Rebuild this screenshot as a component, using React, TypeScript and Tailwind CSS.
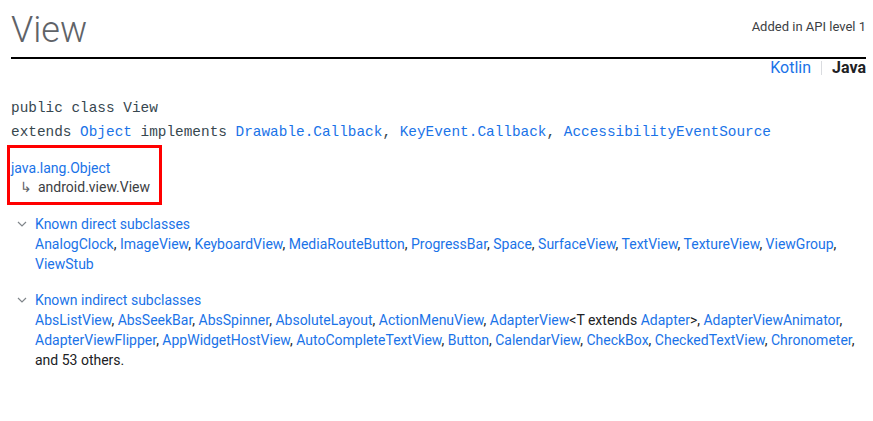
const link = 'text-[#1a73e8]';

const direct = [
  'AnalogClock',
  'ImageView',
  'KeyboardView',
  'MediaRouteButton',
  'ProgressBar',
  'Space',
  'SurfaceView',
  'TextView',
  'TextureView',
  'ViewGroup',
  'ViewStub',
];

function Chevron() {
  return (
    <svg width="10" height="6" viewBox="0 0 10 6" className="mt-[7px] shrink-0">
      <path d="M1 1l4 4 4-4" fill="none" stroke="#80868b" strokeWidth="1.2" />
    </svg>
  );
}

function LinkList({ items }: { items: string[] }) {
  return (
    <>
      {items.map((name, i) => (
        <span key={name}>
          <a className={link}>{name}</a>
          {i < items.length - 1 ? ', ' : ''}
        </span>
      ))}
    </>
  );
}

export default function App() {
  return (
    <div
      className="min-h-[421px] bg-white pl-[11px] pr-[7px] text-[#202124]"
      style={{ fontFamily: 'Roboto, "Liberation Sans", sans-serif' }}
    >
      {/* Header */}
      <div className="flex items-end justify-between border-b-2 border-black pb-[7px] pt-[10px]">
        <h1 className="text-[36px] font-light leading-[40px] text-[#5f6368]">View</h1>
        <span className="mb-[15px] text-[13px] leading-[16px] text-[#3c4043]">Added in API level 1</span>
      </div>

      {/* Language switch */}
      <div className="-mt-[2px] flex items-center justify-end text-[16px] leading-[22px]">
        <a className={link}>Kotlin</a>
        <span className="mx-[10px] h-[14px] w-px bg-[#dadce0]" />
        <span className="font-bold">Java</span>
      </div>

      {/* Signature */}
      <div
        className="mt-[17px] text-[14.4px] leading-[24px] text-[#37474f]"
        style={{ fontFamily: '"Liberation Mono", monospace' }}
      >
        <div>public class View</div>
        <div>
          extends <a className={link}>Object</a> implements <a className={link}>Drawable.Callback</a>,{' '}
          <a className={link}>KeyEvent.Callback</a>, <a className={link}>AccessibilityEventSource</a>
        </div>
      </div>

      {/* Inheritance */}
      <div className="-ml-[4px] mt-[1px] w-[155px] border-[3px] border-[#ff0000] pb-[5px] pl-[1px] pt-[11px] text-[14px] leading-[19px]">
        <div className={link}>java.lang.Object</div>
        <div className="pl-[9px] text-[#3c4043]">
          <span className="mr-[6px] text-[#5f6368]">↳</span>android.view.View
        </div>
      </div>

      {/* Subclasses */}
      <div className="mt-[9px] text-[14px] leading-[20px]">
        <div className="flex gap-[8px] pl-[6px]">
          <Chevron />
          <div>
            <div className={link}>Known direct subclasses</div>
            <div className="text-[#202124]">
              <LinkList items={direct} />
            </div>
          </div>
        </div>

        <div className="mt-[16px] flex gap-[8px] pl-[6px]">
          <Chevron />
          <div>
            <div className={link}>Known indirect subclasses</div>
            <div className="text-[#202124]">
              <LinkList items={['AbsListView', 'AbsSeekBar', 'AbsSpinner', 'AbsoluteLayout', 'ActionMenuView']} />,{' '}
              <a className={link}>AdapterView</a>&lt;T extends <a className={link}>Adapter</a>&gt;,{' '}
              <a className={link}>AdapterViewAnimator</a>,{' '}
              <LinkList
                items={[
                  'AdapterViewFlipper',
                  'AppWidgetHostView',
                  'AutoCompleteTextView',
                  'Button',
                  'CalendarView',
                  'CheckBox',
                  'CheckedTextView',
                  'Chronometer',
                ]}
              />
              , and 53 others.
            </div>
          </div>
        </div>
      </div>
    </div>
  );
}
